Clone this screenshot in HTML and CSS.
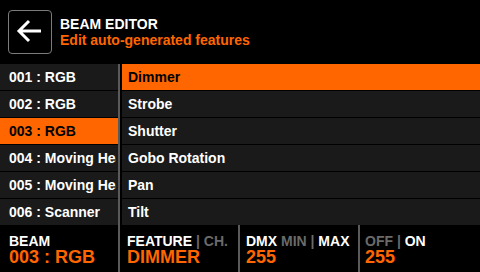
FILE: index.html
```html
<!DOCTYPE html>
<html lang="en">
<head>
  <meta charset="UTF-8" />
  <meta name="viewport" content="width=device-width, initial-scale=1.0" />
  <title>Beam Editor</title>
  <link rel="stylesheet" href="styles.css">
</head>
<body>
<div class="screen">
  <header class="top">
    <button class="back" aria-label="Back">
      <svg width="42" height="42" viewBox="0 0 42 42">
        <path d="M10 20 H32 M20 10 L10 20 L20 30" fill="none" stroke="#fff" stroke-width="3" stroke-linejoin="miter" />
      </svg>
    </button>
    <div class="heading">
      <div class="title">BEAM EDITOR</div>
      <div class="subtitle">Edit auto-generated features</div>
    </div>
  </header>

  <main class="lists">
    <ul class="beams">
      <li><span>001 : RGB</span></li>
      <li><span>002 : RGB</span></li>
      <li class="active"><span>003 : RGB</span></li>
      <li><span>004 : Moving Head</span></li>
      <li><span>005 : Moving Head</span></li>
      <li><span>006 : Scanner</span></li>
    </ul>
    <ul class="features">
      <li class="active">Dimmer</li>
      <li>Strobe</li>
      <li>Shutter</li>
      <li>Gobo Rotation</li>
      <li>Pan</li>
      <li>Tilt</li>
    </ul>
  </main>

  <footer class="status">
    <div class="cell beam">
      <div class="label">BEAM</div>
      <div class="value">003 : RGB</div>
    </div>
    <div class="cell feature">
      <div class="label">FEATURE <span class="dim">| CH.</span></div>
      <div class="value">DIMMER</div>
    </div>
    <div class="cell dmx">
      <div class="label">DMX <span class="dim">MIN |</span> MAX</div>
      <div class="value">255</div>
    </div>
    <div class="cell toggle">
      <div class="label"><span class="dim">OFF |</span> ON</div>
      <div class="value">255</div>
    </div>
  </footer>
</div>
</body>
</html>
```

FILE: styles.css
```css
* { margin: 0; padding: 0; box-sizing: border-box; }
body {
  background: #000;
  color: #fff;
  font-family: "Liberation Sans", Arial, sans-serif;
  font-weight: 700;
  font-size: 14px;
}
.screen {
  width: 480px;
  height: 272px;
  display: flex;
  flex-direction: column;
  overflow: hidden;
}

/* header */
.top {
  height: 64px;
  padding: 8px;
  display: flex;
  align-items: center;
  gap: 8px;
}
.back {
  width: 44px;
  height: 44px;
  border: 1px solid #7c7c7c;
  border-radius: 4px;
  background: #000;
  display: flex;
}
.heading { line-height: 16px; }
.title { color: #fff; }
.subtitle { color: #ff6600; }

/* lists */
.lists {
  height: 161px;
  display: flex;
}
.lists ul {
  list-style: none;
  display: flex;
  flex-direction: column;
  gap: 1px;
}
.lists li {
  height: 26px;
  line-height: 26px;
  background: #1a1a1a;
  white-space: nowrap;
}
.beams {
  width: 120px;
  flex-shrink: 0;
  border-right: 2px solid #5a5a5a;
  margin-right: 2px;
}
.beams li { padding-left: 9px; }
.beams li span {
  display: block;
  width: 107px;
  overflow: hidden;
}
.features { flex: 1; }
.features li { padding: 0 6px; }
.lists li.active {
  background: #ff6600;
  color: #000;
}

/* footer */
.status {
  flex: 1;
  display: flex;
}
.cell {
  width: 120px;
  padding-top: 9px;
  border-left: 2px solid #5a5a5a;
}
.cell.beam {
  width: 118px;
  padding-left: 9px;
  border-left: none;
}
.cell.feature { padding-left: 7px; }
.cell.dmx { padding-left: 6px; }
.cell.toggle { flex: 1; padding-left: 5px; }
.label { line-height: 15px; }
.dim { color: #6a6a6a; }
.value {
  color: #ff6600;
  font-size: 18px;
  line-height: 17px;
}
```
